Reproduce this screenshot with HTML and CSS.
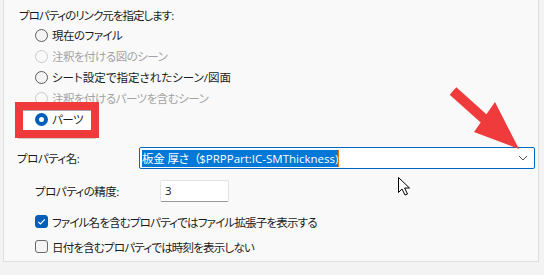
FILE: index.html
```html
<!DOCTYPE html>
<html lang="ja">
<head>
<meta charset="utf-8">
<link rel="stylesheet" href="styles.css">
</head>
<body>
<div class="panel">
  <div class="title">プロパティのリンク元を指定します:</div>
  <div class="options">
    <div class="opt"><span class="radio"></span><span>現在のファイル</span></div>
    <div class="opt disabled"><span class="radio"></span><span>注釈を付ける図のシーン</span></div>
    <div class="opt"><span class="radio"></span><span class="wide">シート設定で指定されたシーン/図面</span></div>
    <div class="opt disabled"><span class="radio"></span><span>注釈を付けるパーツを含むシーン</span></div>
    <div class="opt marked"><span class="radio on"></span><span>パーツ</span></div>
  </div>
  <div class="prop-row">
    <span class="label">プロパティ名:</span>
    <div class="combo">
      <span class="sel">板金 厚さ<span class="fw">（</span><span class="lat">$PRPPart:IC-SMThickness)</span></span><span class="caret"></span>
      <svg class="chev" width="10" height="6" viewBox="0 0 10 6"><path d="M1 1 L5 5 L9 1" fill="none" stroke="#555" stroke-width="1"/></svg>
    </div>
  </div>
  <div class="prec-row">
    <span class="label">プロパティの精度:</span>
    <div class="num">3</div>
  </div>
  <div class="chk-row"><span class="chk on"><svg width="13" height="13" viewBox="0 0 13 13"><path d="M3.2 6.8 L5.4 9 L9.8 4.4" fill="none" stroke="#fff" stroke-width="1.2"/></svg></span><span>ファイル名を含むプロパティではファイル拡張子を表示する</span></div>
  <div class="chk-row"><span class="chk"></span><span>日付を含むプロパティでは時刻を表示しない</span></div>
</div>
<svg class="overlay" width="544" height="275" viewBox="0 0 544 275">
  <path d="M449.7,94.7 L456.3,87.3 L486.4,114.2 L495,102 L519,149 L474,132 L480.7,122.4 Z" fill="#ef3b3b"/>
  <path d="M398.5,177.5 L398.5,192.5 L402,189 L405,195 L407.5,194 L404.6,188 L409.5,188 Z" fill="#fff" stroke="#000" stroke-width="1" stroke-linejoin="round"/>
</svg>
</body>
</html>
```
FILE: styles.css
```css
html, body {
  margin: 0;
  padding: 0;
}
body {
  width: 544px;
  height: 275px;
  overflow: hidden;
  background: #f3f3f3;
  font-family: "Open Sans", "Noto Sans CJK JP", sans-serif;
  font-size: 11.5px;
  letter-spacing: -0.5px;
  color: #1b1b1b;
  font-feature-settings: "palt";
  position: relative;
}
.panel {
  margin-left: 3px;
  width: 534px;
  height: 261px;
  background: #f9f9f9;
  border: 1px solid #dedede;
  border-top: none;
}
.title {
  padding-top: 6px;
  padding-left: 15px;
  height: 20px;
  line-height: 20px;
  letter-spacing: -1px;
}
.options {
  padding-left: 31px;
}
.opt {
  display: flex;
  align-items: center;
  gap: 4px;
  height: 21px;
  line-height: 21px;
}
.options .opt:first-child {
  margin-top: -1px;
}
.opt .wide {
  letter-spacing: 0;
}
.opt.disabled {
  color: #a3a3a3;
}
.radio {
  box-sizing: border-box;
  width: 13px;
  height: 13px;
  border-radius: 50%;
  border: 1px solid #5c5c5c;
  background: #f4f4f4;
}
.opt.disabled .radio {
  border-color: #cbcbcb;
  background: #f9f9f9;
}
.radio.on {
  border: 4px solid #005fb8;
  background: #fff;
}
.opt.marked {
  position: relative;
  z-index: 0;
}
.opt.marked::before {
  content: "";
  position: absolute;
  left: -20px;
  top: -7px;
  width: 84px;
  height: 36px;
  box-sizing: border-box;
  border: 8px solid #ef3b3b;
  background: #fff;
  box-shadow: inset 0 1px 0 #a8a8a8, 0 4px 0 -3px #cfcfcf;
  z-index: -1;
}
.prop-row {
  margin-top: 17px;
  padding-left: 13px;
  padding-right: 3px;
  display: grid;
  grid-template-columns: 122px 1fr;
  align-items: center;
}
.combo {
  box-sizing: border-box;
  height: 22px;
  border: 1px solid #0067c0;
  border-radius: 2px;
  background: #fff;
  display: flex;
  align-items: center;
  padding-left: 2px;
  padding-right: 6px;
}
.sel {
  background: #0078d7;
  color: #fff;
  height: 17px;
  line-height: 17px;
  white-space: nowrap;
  letter-spacing: -0.2px;
}
.fw {
  font-feature-settings: normal;
  letter-spacing: -1px;
}
.lat {
  letter-spacing: 0;
}
.caret {
  width: 1px;
  height: 17px;
  background: #e87400;
}
.chev {
  margin-left: auto;
}
.prec-row {
  margin-top: 11px;
  padding-left: 31px;
  display: grid;
  grid-template-columns: 125px 69px;
  align-items: center;
}
.num {
  box-sizing: border-box;
  height: 22px;
  line-height: 20px;
  background: #fff;
  border: 1px solid #e3e3e3;
  border-bottom-color: #9a9a9a;
  border-radius: 2px;
  padding-left: 4px;
}
.chk-row {
  display: flex;
  align-items: center;
  gap: 4px;
  height: 25px;
  padding-left: 31px;
  letter-spacing: -0.8px;
}
.prec-row + .chk-row {
  margin-top: 7px;
}
.chk {
  box-sizing: border-box;
  width: 13px;
  height: 13px;
  border-radius: 3px;
  border: 1px solid #6a6a6a;
  background: #f4f4f4;
  display: flex;
}
.chk.on {
  border-color: #005fb8;
  background: #005fb8;
}
.chk.on svg {
  margin: -1px;
}
.overlay {
  position: absolute;
  left: 0;
  top: 0;
  pointer-events: none;
}
```
